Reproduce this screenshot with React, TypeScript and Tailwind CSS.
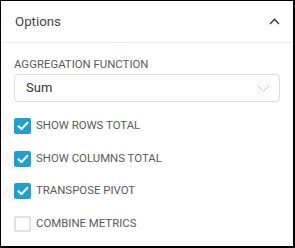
import React from "react";

const Check = ({ checked, label }: { checked: boolean; label: string }) => (
  <div className="flex items-center h-4">
    {checked ? (
      <div className="w-[17px] h-[16px] rounded-[2px] bg-[#1fa1cc] flex items-center justify-center">
        <svg width="12" height="10" viewBox="0 0 12 10" fill="none">
          <path d="M1.5 5.2 L4.5 8 L10.5 1.8" stroke="white" strokeWidth="2" strokeLinecap="round" strokeLinejoin="round" />
        </svg>
      </div>
    ) : (
      <div className="w-[17px] h-[16px] rounded-[2px] border-2 border-[#e2e2e2] bg-white" />
    )}
    <span className="ml-[5px] text-[11.4px] uppercase text-[#5a5a5a]">{label}</span>
  </div>
);

export default function App() {
  return (
    <div
      className="w-[295px] h-[248px] bg-white border-l border-t border-r-2 border-b-2 border-black"
      style={{ fontFamily: "Roboto, 'Liberation Sans', sans-serif" }}
    >
      <div className="h-[42px] flex items-center justify-between pl-[14px] pr-[13px] border-b border-[#ebebeb]">
        <span className="text-[13.3px] text-[#444]">Options</span>
        <svg width="11" height="7" viewBox="0 0 11 7" fill="none">
          <path d="M1 6 L5.5 1.2 L10 6" stroke="#333" strokeWidth="1.3" />
        </svg>
      </div>
      <div className="pl-[13px] pr-[13px] pt-[14px]">
        <div className="text-[11.4px] uppercase text-[#5a5a5a] leading-[14px]">Aggregation Function</div>
        <div className="mt-[3px] h-[28px] border border-[#dcdcdc] rounded-[4px] flex items-center justify-between pl-[11px] pr-[9px]">
          <span className="text-[13px] text-[#333]">Sum</span>
          <svg width="13" height="7" viewBox="0 0 13 7" fill="none">
            <path d="M0.5 0.5 L6.5 6.3 L12.5 0.5" stroke="#c4c4c4" strokeWidth="1" />
          </svg>
        </div>
        <div className="mt-[16px] flex flex-col gap-[16.5px]">
          <Check checked label="Show Rows Total" />
          <Check checked label="Show Columns Total" />
          <Check checked label="Transpose Pivot" />
          <Check checked={false} label="Combine Metrics" />
        </div>
      </div>
    </div>
  );
}
